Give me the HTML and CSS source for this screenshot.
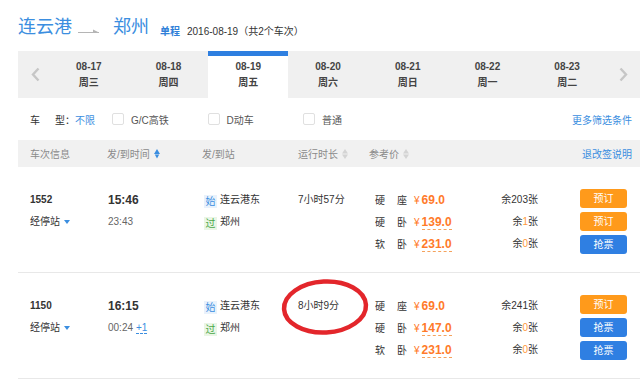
FILE: index.html
```html
<!DOCTYPE html>
<html lang="zh-CN">
<head>
<meta charset="utf-8">
<link rel="stylesheet" href="styles.css">
</head>
<body>
<div class="title">
  <span class="city">连云港</span>
  <svg class="route-arrow" width="22" height="8" viewBox="0 0 22 8"><line x1="0" y1="5.5" x2="21" y2="5.5" stroke="#b5b5b5" stroke-width="1"/><path d="M15 2.5 L21 5.5 L15 5.5 Z" fill="#b5b5b5"/></svg>
  <span class="city">郑州</span>
  <span class="trip">单程</span>
  <span class="date-info">2016-08-19（共2个车次）</span>
</div>

<div class="datebar">
  <div class="nav"><svg width="9" height="15" viewBox="0 0 9 15"><path d="M7.5 1.5 L2 7.5 L7.5 13.5" fill="none" stroke="#c6c6c6" stroke-width="2.4"/></svg></div>
  <div class="day"><div>08-17</div><div>周三</div></div>
  <div class="day"><div>08-18</div><div>周四</div></div>
  <div class="day active"><div>08-19</div><div>周五</div></div>
  <div class="day"><div>08-20</div><div>周六</div></div>
  <div class="day"><div>08-21</div><div>周日</div></div>
  <div class="day"><div>08-22</div><div>周一</div></div>
  <div class="day"><div>08-23</div><div>周二</div></div>
  <div class="nav"><svg width="9" height="15" viewBox="0 0 9 15"><path d="M1.5 1.5 L7 7.5 L1.5 13.5" fill="none" stroke="#c6c6c6" stroke-width="2.4"/></svg></div>
</div>

<div class="filters">
  <div class="ft-label"><span class="k1">车</span><span>型：</span><span class="any">不限</span></div>
  <div class="opt"><span class="box"></span>G/C高铁</div>
  <div class="opt"><span class="box"></span>D动车</div>
  <div class="opt"><span class="box"></span>普通</div>
  <div class="more">更多筛选条件</div>
</div>

<div class="thead">
  <div class="c1">车次信息</div>
  <div class="c2 h2">发/到时间<svg class="sort" width="6" height="10" viewBox="0 0 6 10"><path d="M3 0 L6 5 L0 5 Z M0.8 5.6 L5.2 5.6 L3 9.5 Z" fill="#3b8ee0"/></svg></div>
  <div class="c3 h3">发/到站</div>
  <div class="c4 h4">运行时长<svg class="sort" width="6" height="10" viewBox="0 0 6 10"><path d="M3 0 L6 4.5 L0 4.5 Z M0 5.5 L6 5.5 L3 10 Z" fill="#d4d4d4"/></svg></div>
  <div class="h5">参考价<svg class="sort" width="6" height="10" viewBox="0 0 6 10"><path d="M3 0 L6 4.5 L0 4.5 Z M0 5.5 L6 5.5 L3 10 Z" fill="#d4d4d4"/></svg></div>
  <div class="refund">退改签说明</div>
</div>

<div class="train">
  <div class="c1"><div class="line no">1552</div><div class="line stops">经停站<i class="caret"></i></div></div>
  <div class="c2"><div class="line dep">15:46</div><div class="line arr">23:43</div></div>
  <div class="c3"><div class="line"><span class="badge start">始</span>连云港东</div><div class="line"><span class="badge pass">过</span>郑州</div></div>
  <div class="c4"><div class="line">7小时57分</div></div>
  <div class="c5">
    <div class="line"><span class="seat"><span>硬</span><span>座</span></span><span class="price"><em>¥</em>69.0</span></div>
    <div class="line"><span class="seat"><span>硬</span><span>卧</span></span><span class="price"><em>¥</em><span class="dash">139.0</span></span></div>
    <div class="line"><span class="seat"><span>软</span><span>卧</span></span><span class="price"><em>¥</em><span class="dash">231.0</span></span></div>
  </div>
  <div class="c6">
    <div class="line">余203张</div>
    <div class="line">余<span class="hl">1</span>张</div>
    <div class="line">余<span class="hl">0</span>张</div>
  </div>
  <div class="c7">
    <div class="btn orange">预订</div>
    <div class="btn orange">预订</div>
    <div class="btn blue">抢票</div>
  </div>
</div>

<div class="train">
  <div class="c1"><div class="line no">1150</div><div class="line stops">经停站<i class="caret"></i></div></div>
  <div class="c2"><div class="line dep">16:15</div><div class="line arr">00:24<span class="plus">+1</span></div></div>
  <div class="c3"><div class="line"><span class="badge start">始</span>连云港东</div><div class="line"><span class="badge pass">过</span>郑州</div></div>
  <div class="c4"><div class="line">8小时9分</div></div>
  <div class="c5">
    <div class="line"><span class="seat"><span>硬</span><span>座</span></span><span class="price"><em>¥</em>69.0</span></div>
    <div class="line"><span class="seat"><span>硬</span><span>卧</span></span><span class="price"><em>¥</em><span class="dash">147.0</span></span></div>
    <div class="line"><span class="seat"><span>软</span><span>卧</span></span><span class="price"><em>¥</em><span class="dash">231.0</span></span></div>
  </div>
  <div class="c6">
    <div class="line">余241张</div>
    <div class="line">余<span class="hl">0</span>张</div>
    <div class="line">余<span class="hl">0</span>张</div>
  </div>
  <div class="c7">
    <div class="btn orange">预订</div>
    <div class="btn blue">抢票</div>
    <div class="btn blue">抢票</div>
  </div>
</div>

<svg class="annot" width="90" height="60" viewBox="0 0 90 60"><ellipse cx="44" cy="29" rx="41" ry="25.5" fill="none" stroke="#e3262b" stroke-width="4.5" transform="rotate(-3 44 29)"/></svg>
</body>
</html>
```

FILE: styles.css
```css
* { box-sizing: border-box; margin: 0; padding: 0; }
body {
  margin: 0;
  width: 640px;
  height: 388px;
  overflow: hidden;
  position: relative;
  background: #fff;
  color: #333;
  font-family: "Liberation Sans", "Noto Sans CJK SC", sans-serif;
  font-size: 10px;
}

/* title */
.title {
  display: flex;
  align-items: flex-end;
  height: 51px;
  padding: 14px 0 11px 18px;
}
.city { font-size: 18px; line-height: 26px; color: #3b8ee0; }
.route-arrow { margin: 0 13px 5px 6px; }
.trip { font-size: 10px; line-height: 12px; color: #2f7fd8; font-weight: bold; margin: 0 7px 2px 11px; }
.date-info { font-size: 10px; line-height: 12px; margin-bottom: 2px; color: #333; }

/* date bar */
.datebar {
  display: grid;
  grid-template-columns: 31px repeat(7, 1fr) 33px;
  height: 47px;
  margin-left: 18px;
  background: #f0f0f0;
}
.nav { display: flex; align-items: center; justify-content: center; }
.nav:first-child { padding-left: 4px; }
.day {
  display: flex;
  flex-direction: column;
  align-items: center;
  justify-content: center;
  font-weight: bold;
  line-height: 16px;
  color: #444;
}
.day.active { background: #fff; box-shadow: inset 0 5px 0 #2e7fe0; }

/* filters */
.filters {
  display: flex;
  align-items: center;
  height: 42px;
  padding-left: 30px;
}
.ft-label { display: flex; width: 82px; }
.ft-label .k1 { margin-right: 15px; }
.ft-label .any { color: #3b8ee0; }
.opt { display: flex; align-items: center; width: 95.5px; color: #555; }
.box {
  width: 12px;
  height: 12px;
  border: 1px solid #e0e0e0;
  border-radius: 2px;
  margin-right: 7px;
  background: #fff;
}
.more { margin-left: auto; margin-right: 8px; color: #3b8ee0; }

/* table header */
.thead {
  display: flex;
  align-items: center;
  height: 27px;
  margin-left: 18px;
  padding-left: 12px;
  background: #f1f1f1;
  color: #8a8a8a;
}
.sort { margin-left: 4px; }
.h5 { display: flex; align-items: center; }
.refund { margin-left: auto; margin-right: 8px; color: #3b8ee0; }

/* columns */
.c1 { width: 77px; flex: none; }
.c2 { width: 95px; flex: none; display: flex; flex-direction: column; }
.c3 { width: 96px; flex: none; }
.c4 { width: 71px; flex: none; }
.c5 { width: 120px; flex: none; padding-left: 6px; }
.c6 { width: 49px; flex: none; text-align: right; }
.c7 { width: 47px; flex: none; margin-left: 42px; display: flex; flex-direction: column; gap: 4px; }
.thead .c2, .thead .c4 { flex-direction: row; display: flex; align-items: center; }

/* rows */
.train {
  display: flex;
  margin-left: 18px;
  padding: 22px 0 17px 12px;
  border-bottom: 1px solid #e8e8e8;
}
.line { height: 22px; line-height: 22px; white-space: nowrap; }
.train .c2 { padding-left: 1px; }
.train .c3 { padding-left: 2px; }
.no { font-weight: bold; }
.dep { font-weight: bold; font-size: 12px; }
.arr { color: #666; }
.plus { color: #3b8ee0; margin-left: 3px; border-bottom: 1px dashed #3b8ee0; line-height: 11px; display: inline-block; }
.caret {
  display: inline-block;
  margin-left: 4px;
  width: 0;
  height: 0;
  border-left: 3px solid transparent;
  border-right: 3px solid transparent;
  border-top: 4px solid #3b8ee0;
  vertical-align: 1px;
}
.badge {
  display: inline-block;
  width: 13px;
  height: 13px;
  line-height: 13px;
  text-align: center;
  font-size: 10px;
  margin-right: 3px;
  vertical-align: -2px;
}
.badge.start { color: #3b8ee0; background: #e9f2fc; }
.badge.pass { color: #4aa84a; background: #eaf6e6; }

.seat { display: inline-flex; justify-content: space-between; width: 32px; margin-right: 7px; }
.price { color: #ff7a2a; font-weight: bold; font-size: 12px; }
.price em { font-style: normal; font-weight: normal; font-size: 10px; margin-right: 2px; }
.dash { border-bottom: 1px dashed #f5a25c; display: inline-block; line-height: 13px; }
.hl { color: #ff9a3c; }

.btn {
  height: 19px;
  line-height: 19px;
  border-radius: 3px;
  text-align: center;
  color: #fff;
  font-size: 10px;
}
.btn.orange { background: #ff9a1b; }
.btn.blue { background: #2f7fe2; }

/* annotation */
.annot { position: absolute; left: 281px; top: 278px; }
```
